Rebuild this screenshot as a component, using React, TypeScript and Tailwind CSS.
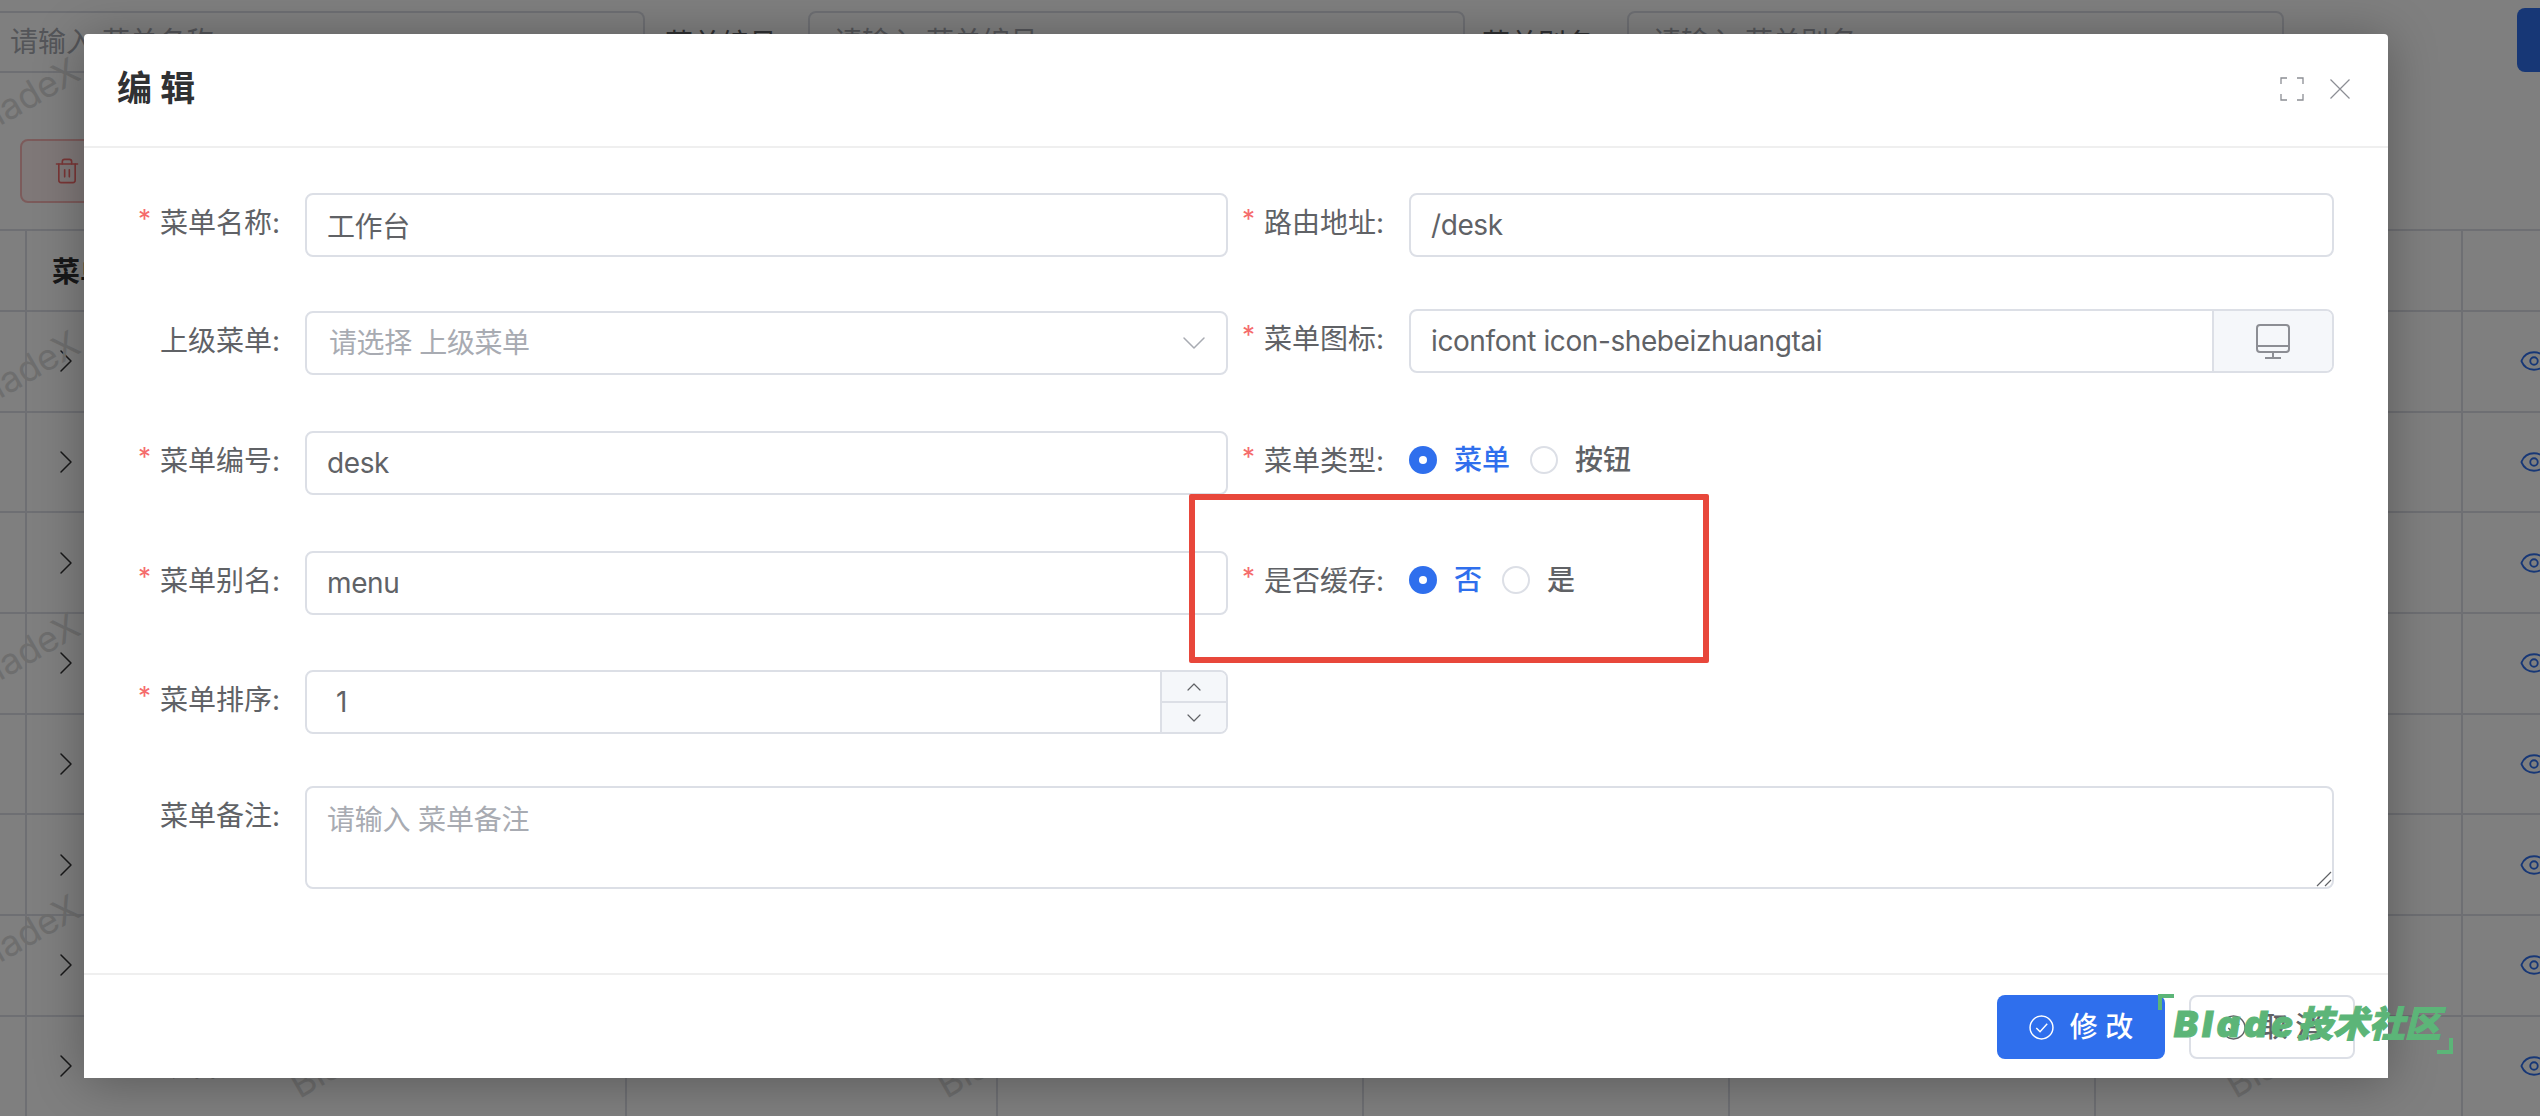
import { ChevronDown, ChevronRight, ChevronUp, Eye, Trash2 } from 'lucide-react';

const rowLabels = ['', '', '', '', '', '', '', '系统备注'];

const watermarks = [
    'left-[-35px] top-[79px]',
    'left-[-35px] top-[352px]',
    'left-[-35px] top-[634px]',
    'left-[-35px] top-[916px]',
    'left-[285px] top-[1040px]',
    'left-[932px] top-[1040px]',
    'left-[2221px] top-[1040px]',
];

const field = 'h-[64px] min-w-0 rounded-[8px] border-2 border-[#dcdfe6] bg-white text-[28px] tracking-[-0.4px] text-[#606266] outline-none';

function Label({ text, required, width }: { text: string; required?: boolean; width: string }) {
    return (
        <div className={`flex h-[59px] shrink-0 items-center justify-end whitespace-nowrap pr-[25px] text-[28px] leading-none text-[#606266] ${width}`}>
            {required && <span className="mr-[9px] mt-[-8px] text-[26px] text-[#f56c6c]">*</span>}
            {text}:
        </div>
    );
}

function TextField({ value }: { value: string }) {
    return <input readOnly value={value} className={`${field} w-full pl-[20px]`} />;
}

function Radio({ text, checked }: { text: string; checked?: boolean }) {
    return (
        <div className="mr-[20px] flex items-center">
            {checked ? (
                <span className="flex h-[28px] w-[28px] items-center justify-center rounded-full bg-[#2f6fed]">
                    <span className="h-[8px] w-[8px] rounded-full bg-white" />
                </span>
            ) : (
                <span className="h-[28px] w-[28px] rounded-full border-2 border-[#dcdfe6] bg-white" />
            )}
            <span className={`ml-[17px] text-[28px] font-medium leading-none ${checked ? 'text-[#2f6fed]' : 'text-[#606266]'}`}>
                {text}
            </span>
        </div>
    );
}

function CheckCircle({ color }: { color: string }) {
    return (
        <svg viewBox="0 0 24 24" className="h-[25px] w-[25px]" fill="none" stroke={color} strokeWidth="1.4">
            <circle cx="12" cy="12" r="11" />
            <path d="M7 12.5l3.6 3.6L17.5 8.5" />
        </svg>
    );
}

function App() {
    return (
        <div className="relative h-[1116px] w-[2540px] overflow-hidden bg-white font-['Inter','Noto_Sans_CJK_SC',sans-serif]">
            {/* page behind the dialog */}
            <div className="flex h-[139px] items-start pt-[11px] text-[28px] text-[#606266]">
                <div className="flex h-[62px] w-[645px] shrink-0 items-center rounded-r-[8px] border-y-2 border-r-2 border-[#dcdfe6] pl-[10px] text-[#a8abb2]">
                    请输入 菜单名称
                </div>
                <div className="w-[163px] shrink-0 pl-[20px] pt-[12px]">菜单编号</div>
                <div className="flex h-[62px] w-[657px] shrink-0 items-center rounded-[8px] border-2 border-[#dcdfe6] pl-[24px] text-[#a8abb2]">
                    请输入 菜单编号
                </div>
                <div className="w-[162px] shrink-0 pl-[17px] pt-[12px]">菜单别名</div>
                <div className="flex h-[62px] w-[657px] shrink-0 items-center rounded-[8px] border-2 border-[#dcdfe6] pl-[24px] text-[#a8abb2]">
                    请输入 菜单别名
                </div>
                <div className="ml-auto mt-[-3px] h-[64px] w-[23px] rounded-l-[8px] bg-[#2f6fed]" />
            </div>
            <div className="h-[90px] pl-[20px]">
                <div className="flex h-[64px] w-[200px] items-center rounded-[8px] border-2 border-[#f9b6b6] bg-[#fef0f0] pl-[31px] text-[#f56c6c]">
                    <Trash2 size={28} strokeWidth={1.4} />
                </div>
            </div>
            <div className="border-t-2 border-[#dcdfe6]">
                <div className="grid h-[81px] grid-cols-[27px_600px_371px_366px_366px_366px_367px_1fr] items-center border-b-2 border-[#dcdfe6] text-[28px] font-bold text-[#303133]">
                    <div className="h-full border-r-2 border-[#dcdfe6]" />
                    <div className="h-full border-r-2 border-[#dcdfe6] pl-[25px] pt-[20px]">菜单名称</div>
                    <div className="h-full border-r-2 border-[#dcdfe6]" />
                    <div className="h-full border-r-2 border-[#dcdfe6]" />
                    <div className="h-full border-r-2 border-[#dcdfe6]" />
                    <div className="h-full border-r-2 border-[#dcdfe6]" />
                    <div className="h-full border-r-2 border-[#dcdfe6]" />
                </div>
                {rowLabels.map((label, i) => (
                    <div
                        key={i}
                        className="grid h-[100.7px] grid-cols-[27px_600px_371px_366px_366px_366px_367px_1fr] items-center border-b-2 border-[#dcdfe6] text-[28px] text-[#303133]"
                    >
                        <div className="h-full border-r-2 border-[#dcdfe6]" />
                        <div className="flex h-full items-center border-r-2 border-[#dcdfe6] pl-[19px]">
                            <ChevronRight size={40} strokeWidth={0.9} className="text-[#303133]" />
                            <span className="ml-[49px] font-medium">{label}</span>
                        </div>
                        <div className="h-full border-r-2 border-[#dcdfe6] pl-[22px] pt-[30px]">{label ? '1' : ''}</div>
                        <div className="h-full border-r-2 border-[#dcdfe6]" />
                        <div className="h-full border-r-2 border-[#dcdfe6]" />
                        <div className="h-full border-r-2 border-[#dcdfe6]" />
                        <div className="h-full border-r-2 border-[#dcdfe6]" />
                        <div className="pl-[56px] text-[#2f6fed]">
                            <Eye size={30} strokeWidth={1.5} />
                        </div>
                    </div>
                ))}
            </div>

            {watermarks.map((pos) => (
                <span
                    key={pos}
                    className={`absolute ${pos} -rotate-[30deg] text-[36px] leading-none text-[#dcdcdc]`}
                >
                    BladeX
                </span>
            ))}

            {/* dialog */}
            <div className="absolute inset-0 bg-black/50">
                <div className="ml-[84px] mt-[34px] flex h-[1044px] w-[2304px] flex-col rounded-t-[4px] bg-white shadow-[0_4px_50px_rgba(0,0,0,0.3)]">
                    <div className="flex h-[114px] shrink-0 items-center justify-between border-b-2 border-[#efefef] pb-[3px] pl-[33px] pr-[38px]">
                        <span className="text-[35px] font-bold leading-none text-[#303133]">编 辑</span>
                        <div className="flex items-center gap-[26px] text-[#8c8e94]">
                            <svg viewBox="0 0 24 24" className="h-[24px] w-[24px]" fill="none" stroke="currentColor" strokeWidth="1.3">
                                <path d="M1 7V1h6M17 1h6v6M23 17v6h-6M7 23H1v-6" />
                            </svg>
                            <svg viewBox="0 0 20 20" className="h-[20px] w-[20px]" fill="none" stroke="currentColor" strokeWidth="1.2">
                                <path d="M0.5 0.5l19 19M19.5 0.5l-19 19" />
                            </svg>
                        </div>
                    </div>

                    <div className="grid h-[825px] shrink-0 grid-cols-[1144px_1106px] grid-rows-[118px_120px_120px_119px_116px_auto] pt-[45px]">
                        <div className="flex">
                            <Label text="菜单名称" required width="w-[221px]" />
                            <TextField value="工作台" />
                        </div>
                        <div className="flex">
                            <Label text="路由地址" required width="w-[181px]" />
                            <TextField value="/desk" />
                        </div>

                        <div className="flex">
                            <Label text="上级菜单" width="w-[221px]" />
                            <div className={`${field} flex w-full items-center justify-between pl-[22px] pr-[12px] text-[#a8abb2]`}>
                                请选择 上级菜单
                                <ChevronDown size={40} strokeWidth={0.9} />
                            </div>
                        </div>
                        <div className="mt-[-2px] flex">
                            <Label text="菜单图标" required width="w-[181px]" />
                            <div className={`${field} flex w-full`}>
                                <span className="flex-1 pl-[20px] leading-[60px]">iconfont icon-shebeizhuangtai</span>
                                <div className="flex w-[120px] items-center justify-center rounded-r-[6px] border-l-2 border-[#dcdfe6] bg-[#f5f7fa] text-[#8c8e94]">
                                    <svg viewBox="0 0 34 35" className="h-[35px] w-[34px]" fill="none" stroke="currentColor" strokeWidth="2">
                                        <rect x="1" y="1" width="32" height="27" rx="3" />
                                        <path d="M1 22h32M17 28v5M9 34h16" />
                                    </svg>
                                </div>
                            </div>
                        </div>

                        <div className="flex">
                            <Label text="菜单编号" required width="w-[221px]" />
                            <TextField value="desk" />
                        </div>
                        <div className="flex items-start">
                            <Label text="菜单类型" required width="w-[181px]" />
                            <div className="flex h-[57px] items-center">
                                <Radio text="菜单" checked />
                                <Radio text="按钮" />
                            </div>
                        </div>

                        <div className="flex">
                            <Label text="菜单别名" required width="w-[221px]" />
                            <TextField value="menu" />
                        </div>
                        <div className="flex items-start">
                            <Label text="是否缓存" required width="w-[181px]" />
                            <div className="flex h-[57px] items-center">
                                <Radio text="否" checked />
                                <Radio text="是" />
                            </div>
                        </div>

                        <div className="flex">
                            <Label text="菜单排序" required width="w-[221px]" />
                            <div className={`${field} flex w-full`}>
                                <span className="flex-1 pl-[29px] leading-[60px]">1</span>
                                <div className="flex w-[66px] flex-col rounded-r-[6px] border-l-2 border-[#dcdfe6] bg-[#f5f7fa] text-[#606266]">
                                    <div className="flex flex-1 items-center justify-center border-b-2 border-[#dcdfe6]">
                                        <ChevronUp size={24} strokeWidth={1.2} />
                                    </div>
                                    <div className="flex flex-1 items-center justify-center">
                                        <ChevronDown size={24} strokeWidth={1.2} />
                                    </div>
                                </div>
                            </div>
                        </div>
                        <div />

                        <div className="col-span-2 flex">
                            <Label text="菜单备注" width="w-[221px]" />
                            <div className="relative h-[103px] flex-1">
                                <textarea
                                    readOnly
                                    placeholder="请输入 菜单备注"
                                    className="h-full w-full resize-none rounded-[8px] border-2 border-[#dcdfe6] px-[20px] py-[12px] text-[28px] leading-[40px] tracking-[-0.2px] text-[#606266] outline-none placeholder:text-[#a8abb2]"
                                />
                                <svg viewBox="0 0 16 16" className="absolute bottom-[2px] right-[2px] h-[16px] w-[16px]" fill="none" stroke="#606266" strokeWidth="1.2">
                                    <path d="M1 15L15 1M9 15l6-6" />
                                </svg>
                            </div>
                        </div>
                    </div>

                    <div className="flex flex-1 items-start justify-end gap-[24px] border-t-2 border-[#efefef] pr-[33px] pt-[20px]">
                        <button type="button" className="flex h-[64px] w-[168px] items-center justify-center gap-[16px] rounded-[8px] bg-[#2f6fed] text-[28px] font-medium text-white">
                            <CheckCircle color="#ffffff" />
                            修 改
                        </button>
                        <button type="button" className="flex h-[64px] w-[166px] items-center justify-center gap-[14px] rounded-[8px] border-2 border-[#dcdfe6] bg-white text-[28px] font-medium text-[#606266]">
                            <CheckCircle color="#606266" />
                            取 消
                        </button>
                    </div>
                </div>
            </div>

            {/* annotation drawn over the screenshot */}
            <div className="absolute left-[1189px] top-[494px] h-[169px] w-[520px] rounded-[2px] border-[6px] border-[#e8473b]" />

            {/* community logo */}
            <div className="absolute left-[2158px] top-[994px] h-[60px] w-[295px]">
                <span className="absolute left-0 top-0 h-[16px] w-[16px] border-l-[4px] border-t-[4px] border-[#5cb578]" />
                <span className="absolute bottom-0 right-0 h-[16px] w-[16px] border-b-[4px] border-r-[4px] border-[#5cb578]" />
                <span className="absolute left-[16px] top-[8px] whitespace-nowrap text-[36px] font-black italic leading-[44px] text-[#5cb578] [-webkit-text-stroke:1px_#5cb578]">
                    <span className="tracking-[4px]">Blade</span>技术社区
                </span>
            </div>
        </div>
    );
}

export default App;
